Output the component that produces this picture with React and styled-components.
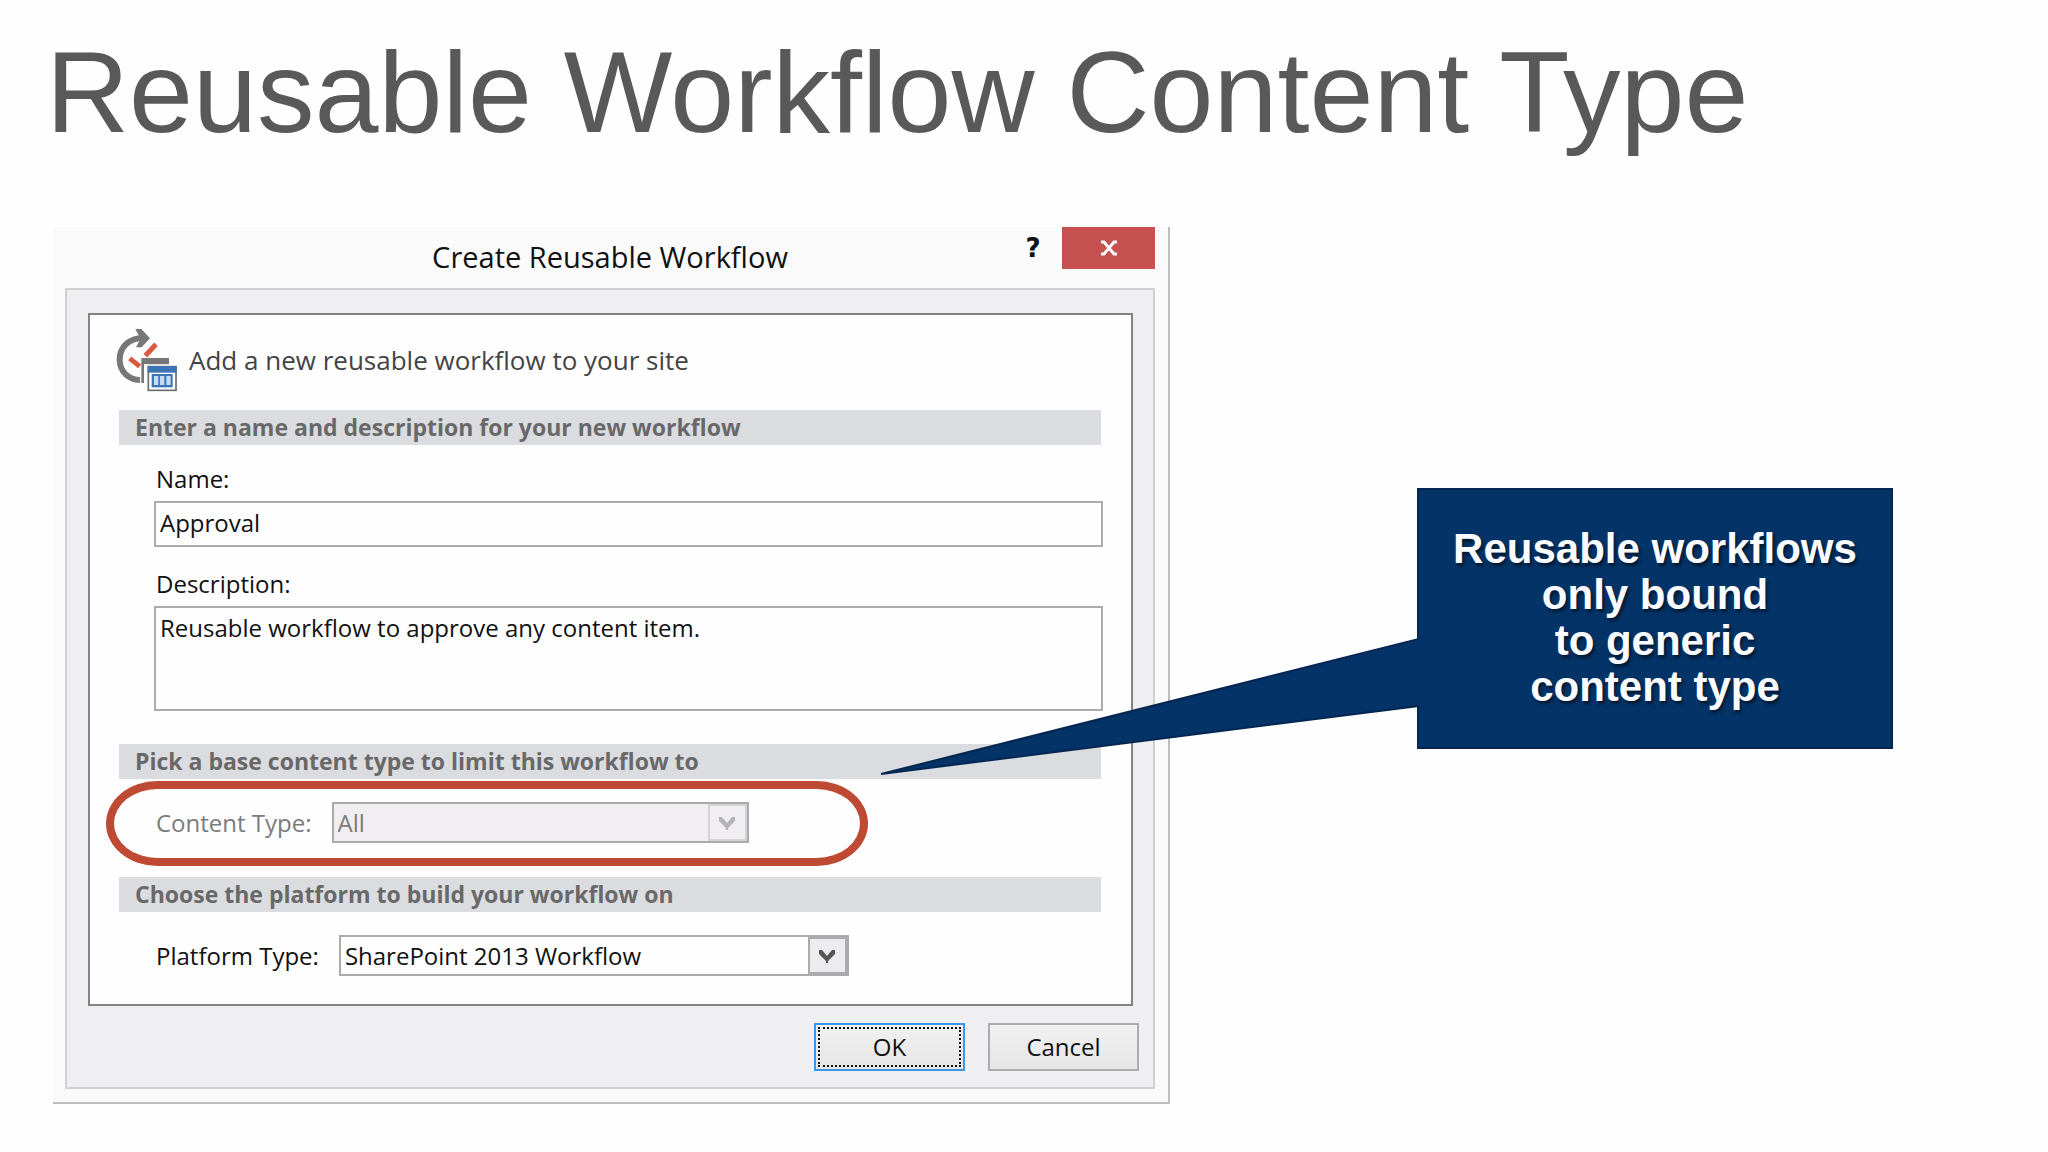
import { useState } from "react";
import styled, { createGlobalStyle } from "styled-components";

const GlobalStyle = createGlobalStyle`
  *,
  *::before,
  *::after {
    box-sizing: border-box;
  }
  body {
    margin: 0;
    background: #fefefe;
    font-family: "Liberation Sans", Arial, sans-serif;
  }
  button,
  input,
  textarea,
  select {
    font: inherit;
    color: inherit;
    border-radius: 0;
  }
`;

const Slide = styled.main`
  padding: 24px 155px 48px 53px;
`;

const SlideTitle = styled.h1`
  margin: 0 0 67px -7px;
  font-size: 115px;
  font-weight: 400;
  line-height: 136px;
  white-space: nowrap;
  color: #595959;
`;

const Content = styled.div`
  display: grid;
  grid-template-columns: 1117fr 476fr;
  column-gap: 247px;
  align-items: start;
`;

const Dialog = styled.section`
  padding: 0 13px 13px 12px;
  border-right: 2px solid #bdbdc0;
  border-bottom: 2px solid #bdbdc0;
  background: #fafafa;
  font-family: "Open Sans", "Noto Sans", sans-serif;
  font-size: 24px;
  line-height: 32px;
  color: #111;
`;

const TitleBar = styled.header`
  display: grid;
  grid-template-columns: 1fr auto 1fr;
  height: 61px;
`;

const DialogTitle = styled.h2`
  grid-column: 2;
  margin: 0;
  padding-top: 10px;
  font-size: 29px;
  font-weight: 400;
  line-height: 40px;
`;

const WindowButtons = styled.div`
  display: flex;
  justify-content: flex-end;
  align-items: flex-start;
`;

const HelpButton = styled.button`
  width: 58px;
  height: 42px;
  padding: 0;
  border: 0;
  background: none;
  font-family: "DejaVu Sans", sans-serif;
  font-size: 26px;
  font-weight: 700;
`;

const CloseButton = styled.button`
  display: flex;
  justify-content: center;
  align-items: center;
  width: 93px;
  height: 42px;
  padding: 0;
  border: 0;
  background: #c75050;
`;

const Frame = styled.div`
  padding: 23px 20px 16px 21px;
  border: 2px solid #d0d0d1;
  background: #efeef0;
`;

const Panel = styled.form`
  padding: 13px 30px 28px 29px;
  border: 2px solid #828287;
  background: #fefefe;
`;

const Intro = styled.div`
  display: flex;
  align-items: center;
  gap: 11px;
  height: 64px;
  margin: 0 0 18px -3px;
  font-size: 26px;
  color: #444;
`;

const SectionTitle = styled.h3`
  margin: 0;
  padding: 0 16px;
  background: #dadcdf;
  font-size: 23px;
  font-weight: 700;
  line-height: 35px;
  color: #686868;
`;

const Fields = styled.div`
  display: flex;
  flex-direction: column;
  gap: 21px;
  margin-right: -2px;
  padding: 18px 0 33px 35px;
`;

const Field = styled.div`
  display: flex;
  flex-direction: column;
  gap: 6px;
`;

const Label = styled.label`
  padding-left: 2px;
`;

const TextInput = styled.input`
  width: 100%;
  height: 46px;
  padding: 0 4px 4px;
  border: 2px solid #ababb0;
  background: #fefefe;
`;

const TextArea = styled.textarea`
  display: block;
  width: 100%;
  height: 105px;
  padding: 4px;
  border: 2px solid #ababb0;
  background: #fefefe;
  resize: none;
`;

const PickerRow = styled.div`
  position: relative;
  display: flex;
  align-items: center;
  gap: 20px;
  padding: 23px 0 ${(props) => (props.$last ? "0" : "34px")} 35px;
  color: ${(props) => (props.$muted ? "#7b7b7d" : "inherit")};
`;

const SelectWrap = styled.div`
  position: relative;
  width: ${(props) => props.$width};
  height: 41px;
`;

const Select = styled.select`
  display: block;
  width: 100%;
  height: 100%;
  padding: 0 48px 0 4px;
  appearance: none;
  border: 2px solid #ababae;
  background: #fefefe;
  opacity: 1;

  &:disabled {
    background: #f0eef1;
    color: #7b7b7d;
  }
`;

const Arrow = styled.span`
  position: absolute;
  top: 2px;
  right: 2px;
  bottom: 2px;
  display: flex;
  justify-content: center;
  align-items: center;
  width: 39px;
  border: 2px solid ${(props) => (props.$muted ? "#d3d2d5" : "#ababae")};
  background: ${(props) => (props.$muted ? "#f0eef1" : "#ececee")};
  color: ${(props) => (props.$muted ? "#b4b4b6" : "#555")};
  pointer-events: none;
`;

const Highlight = styled.div`
  position: absolute;
  top: 2px;
  left: -13px;
  right: 233px;
  height: 85px;
  border: 8px solid #bf4a33;
  border-radius: 52px / 43px;
  pointer-events: none;
`;

const Actions = styled.div`
  display: flex;
  justify-content: flex-end;
  gap: 23px;
  margin-top: 17px;
  margin-right: -6px;
`;

const Button = styled.button`
  width: 151px;
  height: 48px;
  padding: 0;
  border: 2px solid ${(props) => (props.$primary ? "#3c96e8" : "#acacae")};
  background: linear-gradient(#f1f1f2, #e6e6e7);
`;

const FocusRing = styled.span`
  display: flex;
  justify-content: center;
  align-items: center;
  height: 40px;
  margin: 2px;
  border: 2px dotted #111;
`;

const Callout = styled.aside`
  position: relative;
  display: flex;
  justify-content: center;
  align-items: center;
  height: 261px;
  margin-top: 261px;
  border: 2px solid #042650;
  background: #033367;
`;

const CalloutText = styled.p`
  margin: 0;
  padding-bottom: 2px;
  font-size: 42px;
  font-weight: 700;
  line-height: 46px;
  text-align: center;
  white-space: nowrap;
  text-shadow: 2px 3px 3px rgba(0, 0, 0, 0.5);
  color: #fbfcff;
`;

const Tail = styled.svg`
  position: absolute;
  top: 148px;
  right: 100%;
  width: 542px;
  height: 140px;
  margin-right: -2px;
`;

function WorkflowIcon() {
  return (
    <svg width="62" height="64" viewBox="228 54 186 192" aria-hidden="true">
      <path
        d="M318 84C268 80 238 112 239 150C240 186 266 209 300 210"
        fill="none"
        stroke="#777"
        strokeWidth="18"
      />
      <path
        d="M286 57H304L330 85L305 112H288L302 86Z"
        fill="#777"
      />
      <path
        d="M348 103L316 137M269 145L299 169"
        fill="none"
        stroke="#dc5a40"
        strokeWidth="15"
      />
      <path d="M304 144H387V163H312V219H304Z" fill="#777" />
      <rect x="312" y="163" width="11" height="56" fill="#fff" />
      <rect
        x="325"
        y="170"
        width="83"
        height="71"
        fill="#fff"
        stroke="#6a6c70"
        strokeWidth="5"
      />
      <rect x="323" y="168" width="87" height="20" fill="#3d74b5" />
      <rect x="335" y="192" width="63" height="40" fill="#3d74b5" />
      <path d="M342 198h13v27h-13zM360 198h13v27h-13zM379 198h13v27h-13z" fill="#c3dcf5" />
    </svg>
  );
}

function CloseIcon() {
  return (
    <svg width="18" height="16" viewBox="0 0 18 16" aria-hidden="true">
      <path
        d="M1 2h3l10 12h3M17 2h-3L4 14H1"
        fill="none"
        stroke="#fff"
        strokeWidth="3"
      />
    </svg>
  );
}

function ChevronIcon() {
  return (
    <svg width="16" height="14" viewBox="0 0 16 14" aria-hidden="true">
      <path d="M0 1h3l5 6 5-6h3v4l-7 7v2H7v-2L0 5z" fill="currentColor" />
    </svg>
  );
}

export default function App() {
  const [name, setName] = useState("Approval");
  const [description, setDescription] = useState(
    "Reusable workflow to approve any content item."
  );

  return (
    <>
      <GlobalStyle />
      <Slide>
        <SlideTitle>Reusable Workflow Content Type</SlideTitle>
        <Content>
          <Dialog>
            <TitleBar>
              <DialogTitle>Create Reusable Workflow</DialogTitle>
              <WindowButtons>
                <HelpButton type="button">?</HelpButton>
                <CloseButton type="button" aria-label="Close">
                  <CloseIcon />
                </CloseButton>
              </WindowButtons>
            </TitleBar>
            <Frame>
              <Panel id="workflow" onSubmit={(e) => e.preventDefault()}>
                <Intro>
                  <WorkflowIcon />
                  Add a new reusable workflow to your site
                </Intro>

                <SectionTitle>
                  Enter a name and description for your new workflow
                </SectionTitle>
                <Fields>
                  <Field>
                    <Label htmlFor="name">Name:</Label>
                    <TextInput
                      id="name"
                      value={name}
                      onChange={(e) => setName(e.target.value)}
                    />
                  </Field>
                  <Field>
                    <Label htmlFor="description">Description:</Label>
                    <TextArea
                      id="description"
                      value={description}
                      onChange={(e) => setDescription(e.target.value)}
                    />
                  </Field>
                </Fields>

                <SectionTitle>
                  Pick a base content type to limit this workflow to
                </SectionTitle>
                <PickerRow $muted>
                  <Label htmlFor="content-type">Content Type:</Label>
                  <SelectWrap $width="417px">
                    <Select id="content-type" disabled>
                      <option>All</option>
                    </Select>
                    <Arrow $muted>
                      <ChevronIcon />
                    </Arrow>
                  </SelectWrap>
                  <Highlight />
                </PickerRow>

                <SectionTitle>
                  Choose the platform to build your workflow on
                </SectionTitle>
                <PickerRow $last>
                  <Label htmlFor="platform-type">Platform Type:</Label>
                  <SelectWrap $width="510px">
                    <Select id="platform-type">
                      <option>SharePoint 2013 Workflow</option>
                    </Select>
                    <Arrow>
                      <ChevronIcon />
                    </Arrow>
                  </SelectWrap>
                </PickerRow>
              </Panel>
              <Actions>
                <Button type="submit" form="workflow" $primary>
                  <FocusRing>OK</FocusRing>
                </Button>
                <Button type="button">Cancel</Button>
              </Actions>
            </Frame>
          </Dialog>

          <Callout>
            <Tail viewBox="0 0 542 140" aria-hidden="true">
              <path d="M542 1L2 136L542 68Z" fill="#033367" />
              <path
                d="M540 1L2 136L540 68"
                fill="none"
                stroke="#042650"
                strokeWidth="2"
              />
            </Tail>
            <CalloutText>
              Reusable workflows
              <br />
              only bound
              <br />
              to generic
              <br />
              content type
            </CalloutText>
          </Callout>
        </Content>
      </Slide>
    </>
  );
}
